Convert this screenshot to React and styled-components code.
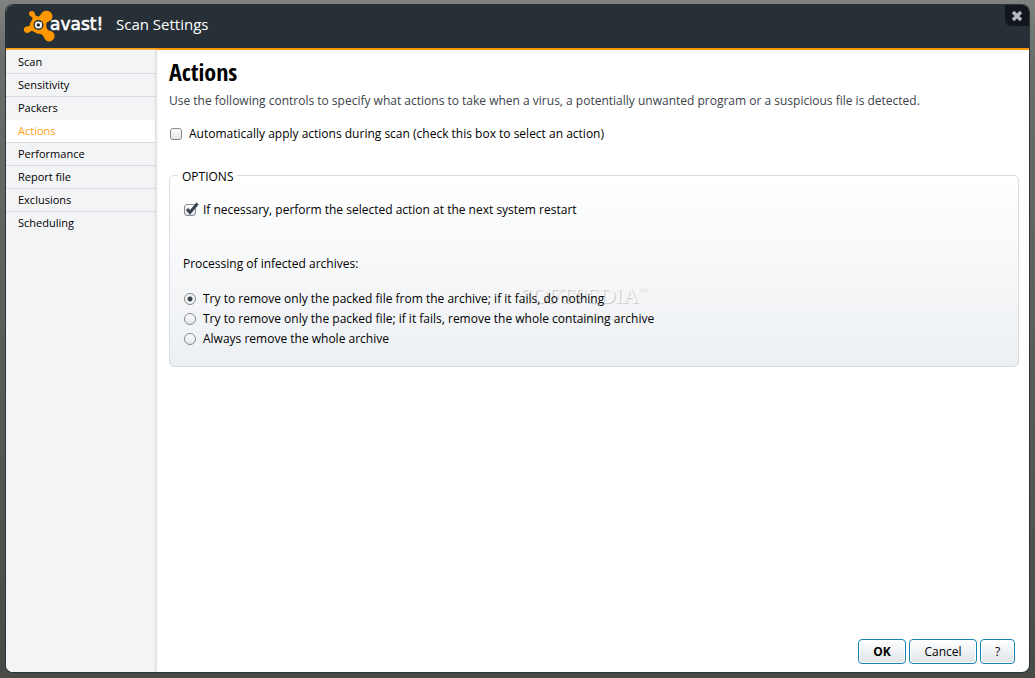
import React, { useState } from 'react';
import styled, { createGlobalStyle } from 'styled-components';

const SECTIONS = [
    'Scan',
    'Sensitivity',
    'Packers',
    'Actions',
    'Performance',
    'Report file',
    'Exclusions',
    'Scheduling',
];

const ARCHIVE_OPTIONS = [
    'Try to remove only the packed file from the archive; if it fails, do nothing',
    'Try to remove only the packed file; if it fails, remove the whole containing archive',
    'Always remove the whole archive',
];

const GlobalStyle = createGlobalStyle`
    * {
        box-sizing: border-box;
    }

    body {
        margin: 0;
        font-family: 'Open Sans', 'Noto Sans', sans-serif;
        font-size: 12px;
        line-height: 20px;
        color: #000;
    }

    button,
    input {
        font: inherit;
        margin: 0;
    }
`;

const Desktop = styled.div`
    display: flex;
    min-height: 100vh;
    padding: 5px 6px 6px;
    background: linear-gradient(#7f827f, #6b6f6b 8%, #5a5e59 50%, #474b45);
`;

const Window = styled.div`
    position: relative;
    flex: 1;
    display: flex;
    flex-direction: column;
    border-radius: 7px;
    overflow: hidden;
    background: #fff;
    box-shadow: 0 0 0 1px #2c343a;
`;

const Header = styled.header`
    display: flex;
    align-items: center;
    height: 45px;
    padding: 0 0 5px 16px;
    background: #272f37;
    border-bottom: 2px solid #ff9800;
`;

const Logo = styled.svg`
    width: 84px;
    height: 34px;
    margin-top: 4px;
`;

const WindowTitle = styled.span`
    margin-left: 10px;
    font-size: 15px;
    color: #fff;
`;

const CloseButton = styled.button`
    position: absolute;
    top: 0;
    right: 0;
    display: flex;
    align-items: center;
    justify-content: center;
    width: 24px;
    height: 21px;
    padding: 0;
    border: 0;
    border-radius: 0 0 0 6px;
    background: #11171c;
`;

const Body = styled.div`
    flex: 1;
    display: flex;
`;

const Sidebar = styled.nav`
    width: 150px;
    padding-top: 1px;
    background: #f3f4f6;
    border-right: 1px solid #d9dbde;
    box-shadow: 1px 0 2px #e4e5e7;
`;

const SectionLink = styled.a`
    display: block;
    height: 23px;
    padding-left: 12px;
    border-bottom: 1px solid ${({ $plain }) => ($plain ? 'transparent' : '#d8dadd')};
    font-size: 11px;
    line-height: 22px;
    text-decoration: none;
    color: ${({ $active }) => ($active ? '#ffa31a' : '#000')};
    background: ${({ $active }) => ($active ? '#fff' : 'transparent')};
`;

const Content = styled.main`
    flex: 1;
    display: flex;
    flex-direction: column;
    padding: 6px 10px 8px 13px;
`;

const Title = styled.h1`
    margin: 0;
    font-family: 'Open Sans Condensed', 'Liberation Sans Narrow', 'Liberation Sans', sans-serif;
    font-size: 24px;
    line-height: 32px;
`;

const Description = styled.p`
    margin: 3px 0 13px;
    color: #3c434b;
`;

const Option = styled.label`
    display: flex;
    align-items: center;
    gap: 7px;
`;

const CheckWrapper = styled.span`
    position: relative;
    display: flex;
    margin-left: 1px;
`;

const Checkbox = styled.input.attrs({ type: 'checkbox' })`
    appearance: none;
    width: 12px;
    height: 12px;
    border: 1px solid #85898e;
    border-radius: 3px;
    background: linear-gradient(#fff, #e2e4e7);
`;

const Tick = styled.svg`
    position: absolute;
    left: 0;
    bottom: 0;
    width: 16px;
    height: 14px;
    pointer-events: none;
`;

const Radio = styled.input.attrs({ type: 'radio' })`
    appearance: none;
    width: 12px;
    height: 12px;
    margin-left: 1px;
    border: 1px solid #85898e;
    border-radius: 50%;
    background: linear-gradient(#fff, #e2e4e7);

    &:checked {
        background: radial-gradient(circle, #36424d 2px, #f4f5f6 3px);
    }
`;

const Options = styled.fieldset`
    position: relative;
    isolation: isolate;
    min-width: 0;
    margin: 19px 0 0;
    padding: 13px 13px 17px;
    border: 1px solid #d9dce0;
    border-radius: 5px;
    background: linear-gradient(#fff, #edf0f3);
`;

const Legend = styled.legend`
    margin-left: -5px;
    padding: 4px 4px 0;
`;

const Archives = styled.div`
    display: flex;
    flex-direction: column;
    margin-top: 34px;
`;

const ArchivesLabel = styled.p`
    margin: 0 0 15px;
`;

/* embossed mark, sits behind the option labels */
const Watermark = styled.div`
    position: absolute;
    z-index: -1;
    top: 91px;
    left: 350px;
    font-family: 'Liberation Serif', serif;
    font-size: 22px;
    line-height: 26px;
    text-align: center;
    color: #f8f9fa;
    text-shadow: 1px 1px 1px #c0c3c7;
    pointer-events: none;

    sup {
        font-size: 8px;
        vertical-align: 10px;
    }

    small {
        display: block;
        font-size: 9px;
        line-height: 14px;
    }
`;

const Footer = styled.footer`
    display: flex;
    justify-content: flex-end;
    gap: 3px;
    margin-top: auto;
    padding-right: 4px;
`;

const Button = styled.button`
    width: ${({ $width }) => $width}px;
    height: 25px;
    padding: 0;
    border: 1px solid #1586b3;
    border-radius: 4px;
    background: linear-gradient(#fff, #dfe3e8);
    box-shadow: inset 0 0 0 1px #fff;
    font-weight: ${({ $primary }) => ($primary ? 700 : 400)};
    color: #000;
`;

const CheckOption = ({ checked, onChange, children }) => (
    <Option>
        <CheckWrapper>
            <Checkbox checked={checked} onChange={(e) => onChange(e.target.checked)} />
            {checked && (
                <Tick viewBox="0 0 16 14">
                    <path d="M3 7 L6 10.5 L13.5 1.5" fill="none" stroke="#36424d" strokeWidth="3" />
                </Tick>
            )}
        </CheckWrapper>
        {children}
    </Option>
);

const AvastLogo = () => (
    <Logo viewBox="22 10 84 34" role="img" aria-label="avast!">
        <path
            fill="#ff9800"
            d="M29 14.5 C29.3 11.5 34 11.2 34.7 14.2 C35 16.2 36.2 17.5 38.5 17.4
               C41 17.3 41 11.8 46.5 11.8 C52 12 53.8 17.2 51.5 20.6
               C49.8 23.2 46.7 22 46.3 25 C46 28.2 47.3 31.2 49.6 31.8
               C53 32.3 55.2 35 54.5 38.2 C53.5 43 46.5 44 44.5 39.5
               C43.4 36.8 42.3 34.9 39.5 34.8 C35.5 34.8 34 31.2 31 32
               C29.8 33 28.4 34.4 26 33.8 C22.8 32.8 23.3 28 26.6 27.6
               C28.5 27.5 29.6 27.2 30 25.3 C30.2 22.5 33.2 21 32.3 18.6
               C31.5 17.3 29 17.2 29 14.5 Z"
        />
        <circle cx="38.5" cy="26" r="5" fill="#272f37" />
        <circle cx="38.3" cy="26" r="2.6" fill="none" stroke="#fff" strokeWidth="1.7" />
        <path d="M41 23.2 L41 28.8" stroke="#fff" strokeWidth="1.4" />
        <text
            x="50"
            y="31"
            fontFamily="DejaVu Sans, sans-serif"
            fontSize="17"
            fill="#fff"
            stroke="#fff"
            strokeWidth="0.6"
        >
            avast!
        </text>
    </Logo>
);

const App = () => {
    const [section, setSection] = useState('Actions');
    const [autoApply, setAutoApply] = useState(false);
    const [atRestart, setAtRestart] = useState(true);
    const [archive, setArchive] = useState(0);

    return (
        <Desktop>
            <GlobalStyle />
            <Window>
                <Header>
                    <AvastLogo />
                    <WindowTitle>Scan Settings</WindowTitle>
                    <CloseButton aria-label="Close">
                        <svg width="12" height="12" viewBox="0 0 12 12">
                            <path d="M2 2 L10 10 M10 2 L2 10" stroke="#b3b8bf" strokeWidth="3.4" />
                        </svg>
                    </CloseButton>
                </Header>
                <Body>
                    <Sidebar>
                        {SECTIONS.map((name, index) => (
                            <SectionLink
                                key={name}
                                href="#"
                                $active={name === section}
                                $plain={
                                    SECTIONS[index + 1] === section || index === SECTIONS.length - 1
                                }
                                onClick={() => setSection(name)}
                            >
                                {name}
                            </SectionLink>
                        ))}
                    </Sidebar>
                    <Content>
                        <Title>Actions</Title>
                        <Description>
                            Use the following controls to specify what actions to take when a virus,
                            a potentially unwanted program or a suspicious file is detected.
                        </Description>
                        <CheckOption checked={autoApply} onChange={setAutoApply}>
                            Automatically apply actions during scan (check this box to select an
                            action)
                        </CheckOption>
                        <Options>
                            <Legend>OPTIONS</Legend>
                            <CheckOption checked={atRestart} onChange={setAtRestart}>
                                If necessary, perform the selected action at the next system restart
                            </CheckOption>
                            <Archives role="radiogroup" aria-labelledby="archives">
                                <ArchivesLabel id="archives">
                                    Processing of infected archives:
                                </ArchivesLabel>
                                {ARCHIVE_OPTIONS.map((text, index) => (
                                    <Option key={text}>
                                        <Radio
                                            name="archive"
                                            checked={archive === index}
                                            onChange={() => setArchive(index)}
                                        />
                                        {text}
                                    </Option>
                                ))}
                            </Archives>
                            <Watermark>
                                SOFTPEDIA<sup>™</sup>
                                <small>www.softpedia.com</small>
                            </Watermark>
                        </Options>
                        <Footer>
                            <Button $width={48} $primary>
                                OK
                            </Button>
                            <Button $width={68}>Cancel</Button>
                            <Button $width={35}>?</Button>
                        </Footer>
                    </Content>
                </Body>
            </Window>
        </Desktop>
    );
};

export default App;
